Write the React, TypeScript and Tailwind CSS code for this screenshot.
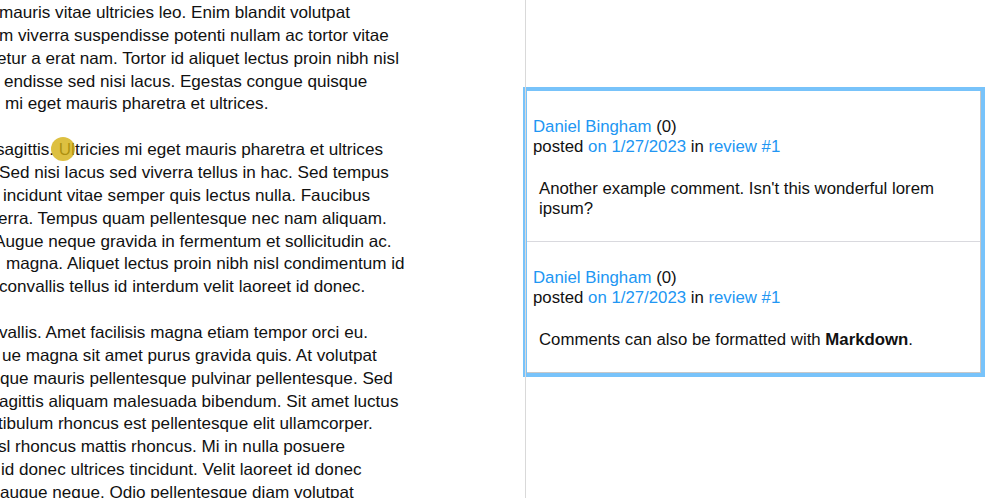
import React from "react";

type Line = [string, string];

const paragraphs: Line[][] = [
  [
    ["mauris vitae ultricies leo. Enim blandit volutpat", "-ml-px"],
    ["m viverra suspendisse potenti nullam ac tortor vitae", "-ml-px"],
    ["etur a erat nam. Tortor id aliquet lectus proin nibh nisl", "-ml-[3px]"],
    ["endisse sed nisi lacus. Egestas congue quisque", "ml-1"],
    ["mi eget mauris pharetra et ultrices.", "ml-[5px]"],
  ],
  [
    ["sagittis. Ultricies mi eget mauris pharetra et ultrices", "-ml-1"],
    ["Sed nisi lacus sed viverra tellus in hac. Sed tempus", "-ml-px"],
    ["incidunt vitae semper quis lectus nulla. Faucibus", "ml-[3px]"],
    ["erra. Tempus quam pellentesque nec nam aliquam.", "-ml-0.5"],
    ["Augue neque gravida in fermentum et sollicitudin ac.", "-ml-1.5"],
    ["magna. Aliquet lectus proin nibh nisl condimentum id", "ml-1.5"],
    ["convallis tellus id interdum velit laoreet id donec.", "-ml-px"],
  ],
  [
    ["vallis. Amet facilisis magna etiam tempor orci eu.", "-ml-px"],
    ["ue magna sit amet purus gravida quis. At volutpat", "ml-0.5"],
    ["que mauris pellentesque pulvinar pellentesque. Sed", ""],
    ["agittis aliquam malesuada bibendum. Sit amet luctus", "-ml-px"],
    ["tibulum rhoncus est pellentesque elit ullamcorper.", "-ml-0.5"],
    ["sl rhoncus mattis rhoncus. Mi in nulla posuere", "-ml-0.5"],
    ["id donec ultrices tincidunt. Velit laoreet id donec", "ml-px"],
    ["augue neque. Odio pellentesque diam volutpat", ""],
  ],
];

function Comment({ children, last }: { children: React.ReactNode; last?: boolean }) {
  return (
    <div className={`pt-[26px] pb-[22px] ${last ? "" : "border-b border-[#d9d9de]"}`}>
      <div className="px-1.5 leading-5">
        <div>
          <a className="text-[#2196f3]">Daniel Bingham</a> (0)
        </div>
        <div>
          posted <a className="text-[#2196f3]">on 1/27/2023</a> in{" "}
          <a className="text-[#2196f3]">review #1</a>
        </div>
      </div>
      <div className="mt-[22px] pl-3 pr-3 leading-5">{children}</div>
    </div>
  );
}

export default function App() {
  return (
    <div className="flex h-[498px] w-[1008px] overflow-hidden bg-white font-['Liberation_Sans',Arial,sans-serif] text-[#111]">
      {/* document text, scrolled horizontally */}
      <div className="relative h-full w-[526px] shrink-0 overflow-hidden border-r border-[#d9d9d9]">
        <div className="pt-0.5 text-[17.12px] leading-[22.857px]">
          {paragraphs.map((p, i) => (
            <div key={i} className={i > 0 ? "mt-[22.857px]" : ""}>
              {p.map(([t, cls], j) => (
                <div key={j} className={`whitespace-nowrap ${cls}`}>
                  {t}
                </div>
              ))}
            </div>
          ))}
        </div>
        {/* annotation marker */}
        <div className="absolute left-[51px] top-[137px] h-6 w-6 rounded-full bg-[rgba(212,176,18,0.8)]" />
      </div>

      {/* comment thread */}
      <div className="flex-1 pl-px pt-[91px] text-[16.8px]">
        <div className="w-[454px] border-r border-b border-[#c8c8c8] bg-white outline-4 outline-[#78c3fa]">
          <Comment>Another example comment. Isn't this wonderful lorem ipsum?</Comment>
          <Comment last>
            Comments can also be formatted with <strong className="font-bold">Markdown</strong>.
          </Comment>
        </div>
      </div>
    </div>
  );
}
